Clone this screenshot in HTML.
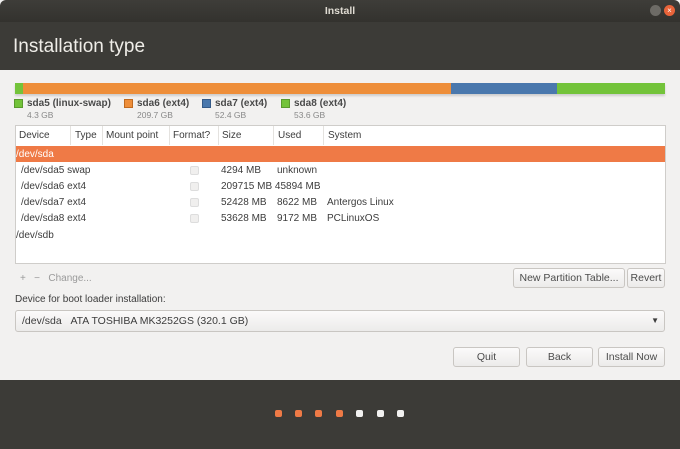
<!DOCTYPE html>
<html><head><style>
*{margin:0;padding:0;box-sizing:border-box}
body{width:680px;height:449px;overflow:hidden;background:#f2f1f0;font-family:"Liberation Sans",sans-serif;position:relative;color:#3c3c3c}
.abs{position:absolute}
.t{font-size:10px;white-space:nowrap}
.btn{position:absolute;border:1px solid #c9c6c2;border-radius:3px;background:linear-gradient(#fbfafa,#ecebea);font-size:10.5px;color:#4c4c4c;text-align:center;}
.dot{position:absolute;width:7px;height:7px;border-radius:2px;top:410px}
.cb{position:absolute;left:190px;width:9px;height:9px;border:1px solid #ddd;background:#f0efee;border-radius:2px}
</style></head><body>
<div class="abs" style="left:0;top:0;width:680px;height:22px;background:linear-gradient(#3e3d39,#33322e);border-radius:6px 6px 0 0"></div>
<div class="abs t" style="left:0;width:680px;top:5px;text-align:center;color:#dfdbd2;font-weight:bold;font-size:10.5px">Install</div>
<div class="abs" style="left:650px;top:5px;width:11px;height:11px;border-radius:50%;background:#6d6b66"></div>
<div class="abs" style="left:664px;top:5px;width:11px;height:11px;border-radius:50%;background:#e9643a;color:#fff;font-size:8px;line-height:11px;text-align:center">×</div>
<div class="abs" style="left:0;top:22px;width:680px;height:48px;background:#3c3b37"></div>
<div class="abs" style="left:13px;top:36px;color:#efede8;font-size:19px">Installation type</div>
<div class="abs" style="left:15px;top:83px;height:11px;width:650px;display:flex;box-shadow:0 2px 2px rgba(0,0,0,.15)">
<div style="width:8px;background:#73c33a"></div><div style="width:428px;background:#ee8e3a"></div><div style="width:106px;background:#4a78ad"></div><div style="flex:1;background:#73c33a"></div></div>
<div class="abs" style="left:14px;top:99px;width:9px;height:9px;background:#73c33a;border:1px solid #5a9a2e"></div>
<div class="abs t" style="left:27px;top:98px;font-weight:bold;color:#4a4a4a">sda5 (linux-swap)</div>
<div class="abs t" style="left:27px;top:110px;font-size:8.5px;color:#888">4.3 GB</div>
<div class="abs" style="left:124px;top:99px;width:9px;height:9px;background:#ee8e3a;border:1px solid #c06a20"></div>
<div class="abs t" style="left:137px;top:98px;font-weight:bold;color:#4a4a4a">sda6 (ext4)</div>
<div class="abs t" style="left:137px;top:110px;font-size:8.5px;color:#888">209.7 GB</div>
<div class="abs" style="left:202px;top:99px;width:9px;height:9px;background:#4a78ad;border:1px solid #345a88"></div>
<div class="abs t" style="left:215px;top:98px;font-weight:bold;color:#4a4a4a">sda7 (ext4)</div>
<div class="abs t" style="left:215px;top:110px;font-size:8.5px;color:#888">52.4 GB</div>
<div class="abs" style="left:281px;top:99px;width:9px;height:9px;background:#73c33a;border:1px solid #5a9a2e"></div>
<div class="abs t" style="left:294px;top:98px;font-weight:bold;color:#4a4a4a">sda8 (ext4)</div>
<div class="abs t" style="left:294px;top:110px;font-size:8.5px;color:#888">53.6 GB</div>
<div class="abs" style="left:15px;top:125px;width:651px;height:139px;background:#fff;border:1px solid #cfcdca"></div>
<div class="abs" style="left:70px;top:126px;width:1px;height:19px;background:#e4e2df"></div>
<div class="abs" style="left:102px;top:126px;width:1px;height:19px;background:#e4e2df"></div>
<div class="abs" style="left:169px;top:126px;width:1px;height:19px;background:#e4e2df"></div>
<div class="abs" style="left:218px;top:126px;width:1px;height:19px;background:#e4e2df"></div>
<div class="abs" style="left:273px;top:126px;width:1px;height:19px;background:#e4e2df"></div>
<div class="abs" style="left:323px;top:126px;width:1px;height:19px;background:#e4e2df"></div>
<div class="abs t" style="left:19px;top:130px">Device</div>
<div class="abs t" style="left:75px;top:130px">Type</div>
<div class="abs t" style="left:106px;top:130px">Mount point</div>
<div class="abs t" style="left:173px;top:130px">Format?</div>
<div class="abs t" style="left:222px;top:130px">Size</div>
<div class="abs t" style="left:278px;top:130px">Used</div>
<div class="abs t" style="left:328px;top:130px">System</div>
<div class="abs" style="left:16px;top:146px;width:649px;height:16px;background:#ef7a46"></div>
<div class="abs t" style="left:16px;top:149px;color:#fff">/dev/sda</div>
<div class="abs t" style="left:21px;top:165px">/dev/sda5 swap</div><div class="cb" style="top:166px"></div>
<div class="abs t" style="left:221px;top:165px">4294 MB</div><div class="abs t" style="left:277px;top:165px">unknown</div>
<div class="abs t" style="left:21px;top:181px">/dev/sda6 ext4</div><div class="cb" style="top:182px"></div>
<div class="abs t" style="left:221px;top:181px">209715 MB 45894 MB</div>
<div class="abs t" style="left:21px;top:197px">/dev/sda7 ext4</div><div class="cb" style="top:198px"></div>
<div class="abs t" style="left:221px;top:197px">52428 MB</div><div class="abs t" style="left:277px;top:197px">8622 MB</div><div class="abs t" style="left:327px;top:197px">Antergos Linux</div>
<div class="abs t" style="left:21px;top:213px">/dev/sda8 ext4</div><div class="cb" style="top:214px"></div>
<div class="abs t" style="left:221px;top:213px">53628 MB</div><div class="abs t" style="left:277px;top:213px">9172 MB</div><div class="abs t" style="left:327px;top:213px">PCLinuxOS</div>
<div class="abs t" style="left:16px;top:230px">/dev/sdb</div>
<div class="abs t" style="left:20px;top:273px;color:#9a9a9a">+ &nbsp; − &nbsp; Change...</div>
<div class="btn" style="left:513px;top:268px;width:112px;height:20px;line-height:18px">New Partition Table...</div>
<div class="btn" style="left:627px;top:268px;width:38px;height:20px;line-height:18px">Revert</div>
<div class="abs t" style="left:15px;top:294px">Device for boot loader installation:</div>
<div class="btn" style="left:15px;top:310px;width:650px;height:22px;text-align:left;padding-left:6px;line-height:20px;color:#3c3c3c">/dev/sda &nbsp;&nbsp;ATA TOSHIBA MK3252GS (320.1 GB)<span style="position:absolute;right:5px;font-size:8px">▼</span></div>
<div class="btn" style="left:453px;top:347px;width:67px;height:20px;line-height:18px">Quit</div>
<div class="btn" style="left:526px;top:347px;width:67px;height:20px;line-height:18px">Back</div>
<div class="btn" style="left:598px;top:347px;width:67px;height:20px;line-height:18px">Install Now</div>
<div class="abs" style="left:0;top:380px;width:680px;height:69px;background:#3c3b37"></div>
<div class="dot" style="left:275px;background:#ef7a46"></div>
<div class="dot" style="left:295px;background:#ef7a46"></div>
<div class="dot" style="left:315px;background:#ef7a46"></div>
<div class="dot" style="left:336px;background:#ef7a46"></div>
<div class="dot" style="left:356px;background:#f2f1f0"></div>
<div class="dot" style="left:377px;background:#f2f1f0"></div>
<div class="dot" style="left:397px;background:#f2f1f0"></div>
</body></html>
